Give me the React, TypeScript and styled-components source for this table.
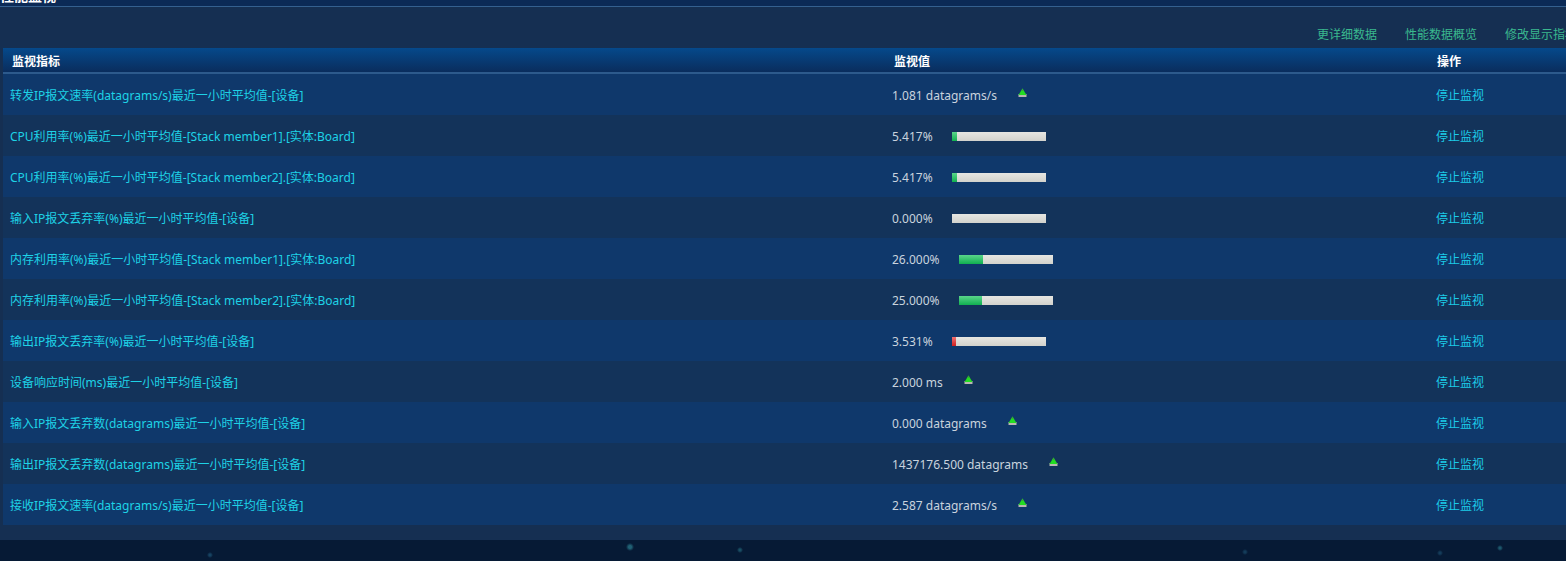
import styled, { createGlobalStyle } from "styled-components";

const GlobalStyle = createGlobalStyle`
  html, body {
    margin: 0;
    padding: 0;
    overflow: hidden;
    background: #061a35;
  }
  body {
    font-family: "Noto Sans", "Noto Sans CJK SC", sans-serif;
    font-size: 12px;
  }
`;

const Page = styled.div`
  width: 1566px;
  height: 561px;
  overflow: hidden;
  background-color: #061a35;
  background-image:
    radial-gradient(circle at 95px 530px, rgba(60, 160, 200, 0.35) 0 1px, transparent 3px),
    radial-gradient(circle at 210px 555px, rgba(60, 160, 200, 0.3) 0 1px, transparent 3px),
    radial-gradient(circle at 630px 547px, rgba(70, 200, 210, 0.4) 0 1.5px, transparent 4px),
    radial-gradient(circle at 740px 550px, rgba(70, 200, 210, 0.3) 0 1px, transparent 3px),
    radial-gradient(circle at 1245px 552px, rgba(60, 160, 200, 0.25) 0 1px, transparent 3px),
    radial-gradient(circle at 1500px 548px, rgba(70, 200, 210, 0.35) 0 1px, transparent 3px),
    radial-gradient(circle at 1440px 553px, rgba(60, 160, 200, 0.25) 0 1px, transparent 3px);
`;

const TitleBar = styled.div`
  height: 6px;
  overflow: hidden;
  background: #0b2a56;
  border-bottom: 1px solid #34608f;
`;

const TitleText = styled.div`
  margin-top: -13px;
  color: #ffffff;
  font-weight: bold;
  font-size: 14px;
  line-height: 18px;
`;

const Panel = styled.div`
  width: 1620px;
  height: 533px;
  background: #152f52;
  padding: 0 0 0 3px;
  box-sizing: border-box;
`;

const LinkBar = styled.div`
  display: flex;
  justify-content: flex-end;
  gap: 28px;
  height: 41px;
  align-items: flex-end;
  padding-right: 43px;
  padding-bottom: 5px;
  box-sizing: border-box;
`;

const TopLink = styled.a`
  color: #3ab88e;
  font-size: 12px;
  cursor: pointer;
`;

const Table = styled.div`
  width: 1617px;
`;

const Cols = `
  display: grid;
  grid-template-columns: 882px 544px 1fr;
  align-items: center;
`;

const HeadRow = styled.div`
  ${Cols}
  height: 24px;
  background: linear-gradient(#05498b, #0a2d5d);
  border-bottom: 2px solid #2d5a8c;
  color: #ffffff;
  font-weight: bold;
`;

const HeadCell = styled.div<{ $pad: number }>`
  padding-left: ${(p) => p.$pad}px;
  padding-top: 2px;
`;

const Row = styled.div<{ $odd: boolean }>`
  ${Cols}
  height: 41px;
  padding-top: 1px;
  box-sizing: border-box;
  background: ${(p) => (p.$odd ? "#0f386b" : "#13335a")};
`;

const NameCell = styled.div`
  padding-left: 7px;
  color: #1ed2e6;
`;

const ValueCell = styled.div`
  padding-left: 7px;
  color: #c9d3de;
  display: flex;
  align-items: center;
`;

const OpCell = styled.div`
  padding-left: 7px;
`;

const OpLink = styled.a`
  color: #1ccbe8;
  cursor: pointer;
`;

const Bar = styled.div`
  margin-left: 19px;
  width: 94px;
  height: 9px;
  background: linear-gradient(#e6e6e2, #d2d2cc);
  display: flex;
`;

const BarFill = styled.div<{ $color: string }>`
  height: 100%;
  background: ${(p) =>
    p.$color === "red"
      ? "linear-gradient(#f07070, #d02020)"
      : "linear-gradient(#5ad58a, #10b050)"};
`;

const Arrow = styled.svg`
  margin-left: 21px;
  margin-top: -6px;
`;

function UpArrow() {
  return (
    <Arrow width="9" height="9" viewBox="0 0 9 9">
      <rect x="0.5" y="6" width="8" height="3" fill="#b8b8b0" />
      <polygon points="4.5,0.5 8.5,7 0.5,7" fill="#22dd22" />
      <polygon points="4.5,0.5 6,3 3,3" fill="#33aa33" />
    </Arrow>
  );
}

type Metric = {
  name: string;
  value: string;
  bar?: number;
  color?: string;
};

const metrics: Metric[] = [
  { name: "转发IP报文速率(datagrams/s)最近一小时平均值-[设备]", value: "1.081 datagrams/s" },
  { name: "CPU利用率(%)最近一小时平均值-[Stack member1].[实体:Board]", value: "5.417%", bar: 5.417 },
  { name: "CPU利用率(%)最近一小时平均值-[Stack member2].[实体:Board]", value: "5.417%", bar: 5.417 },
  { name: "输入IP报文丢弃率(%)最近一小时平均值-[设备]", value: "0.000%", bar: 0 },
  { name: "内存利用率(%)最近一小时平均值-[Stack member1].[实体:Board]", value: "26.000%", bar: 26 },
  { name: "内存利用率(%)最近一小时平均值-[Stack member2].[实体:Board]", value: "25.000%", bar: 25 },
  { name: "输出IP报文丢弃率(%)最近一小时平均值-[设备]", value: "3.531%", bar: 3.531, color: "red" },
  { name: "设备响应时间(ms)最近一小时平均值-[设备]", value: "2.000 ms" },
  { name: "输入IP报文丢弃数(datagrams)最近一小时平均值-[设备]", value: "0.000 datagrams" },
  { name: "输出IP报文丢弃数(datagrams)最近一小时平均值-[设备]", value: "1437176.500 datagrams" },
  { name: "接收IP报文速率(datagrams/s)最近一小时平均值-[设备]", value: "2.587 datagrams/s" },
];

export default function App() {
  return (
    <Page>
      <GlobalStyle />
      <TitleBar>
        <TitleText>性能监视</TitleText>
      </TitleBar>
      <Panel>
        <LinkBar>
          <TopLink>更详细数据</TopLink>
          <TopLink>性能数据概览</TopLink>
          <TopLink>修改显示指标</TopLink>
        </LinkBar>
        <Table>
          <HeadRow>
            <HeadCell $pad={9}>监视指标</HeadCell>
            <HeadCell $pad={9}>监视值</HeadCell>
            <HeadCell $pad={8}>操作</HeadCell>
          </HeadRow>
          {metrics.map((m, i) => (
            <Row key={i} $odd={i % 2 === 0}>
              <NameCell>{m.name}</NameCell>
              <ValueCell>
                {m.value}
                {m.bar === undefined ? (
                  <UpArrow />
                ) : (
                  <Bar>
                    <BarFill
                      $color={m.color || "green"}
                      style={{ width: `${Math.max(m.bar, m.bar > 0 ? 5 : 0)}%` }}
                    />
                  </Bar>
                )}
              </ValueCell>
              <OpCell>
                <OpLink>停止监视</OpLink>
              </OpCell>
            </Row>
          ))}
        </Table>
      </Panel>
    </Page>
  );
}
